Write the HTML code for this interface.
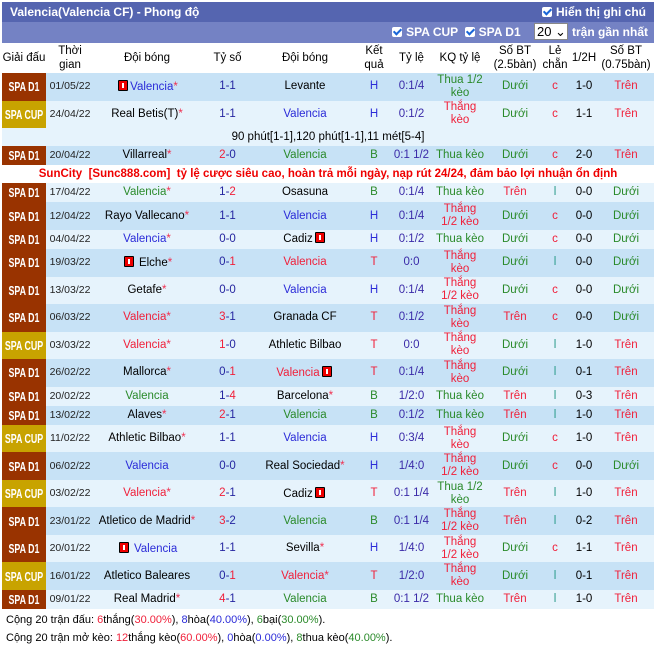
<!DOCTYPE html>
<html><head><meta charset="utf-8">
<style>
body{margin:0;background:#fff;font-family:"Liberation Sans",Arial,sans-serif;font-size:12px;}
#w{position:absolute;left:2px;top:2px;width:652px;}
.b1{height:20px;background:#5565b0;color:#fff;font-weight:bold;font-size:12px;line-height:20px;padding-left:8px;position:relative;}
.b2{height:21px;background:#7482c4;color:#fff;font-weight:bold;font-size:12px;line-height:21px;text-align:right;padding-right:6px;}
.cb{display:inline-block;width:10px;height:10px;background:#fff;border-radius:2px;vertical-align:-1px;margin-right:4px;position:relative;}
.cb:after{content:"";position:absolute;left:3px;top:0px;width:3px;height:6px;border:solid #1a66d8;border-width:0 2px 2px 0;transform:rotate(45deg);}
.sel{display:inline-block;background:#fff;color:#000;font-weight:normal;border:1px solid #888;height:15px;line-height:15px;width:30px;padding-left:2px;text-align:left;vertical-align:0;margin:0 4px 0 10px;font-size:13px;}
table{border-collapse:collapse;table-layout:fixed;width:652px;font-size:11.5px;}
td{text-align:center;padding:0;line-height:13px;overflow:visible;white-space:nowrap;}
th{font-weight:normal;height:30px;line-height:14px;background:#fff;font-size:11.5px;color:#000;padding:0;white-space:nowrap;}
.lg{color:#fff;font-weight:bold;font-size:13px;overflow:hidden;}
.lg span{display:block;width:70px;margin-left:-13px;text-align:center;transform:scaleX(0.68);}
.d1{background:#993300;}.cup{background:#c8a300;}
tr.L td{background:#e6f3fc;}tr.D td{background:#c7e2f6;}
tr.L td.d1,tr.D td.d1{background:#993300;}tr.L td.cup,tr.D td.cup{background:#c8a300;}
.h2 td{height:27.5px;}.h1 td{height:19.2px;}
.dt{font-size:10.5px;color:#222;}
.bl{color:#2b2bd8}.gr{color:#2a8a2a}.rd{color:#f0203a}.st{color:#f03050}
.sb{color:#2525a0}.sr{color:#f0203a}
.od{color:#3a2aa8}
.k{color:#000}
.tl{color:#2a9a8a}
.rc{display:inline-block;width:8px;height:9px;background:#e00;border:1px solid #000;border-radius:1px;vertical-align:-1px;position:relative;margin:0 2px;}
.rc:after{content:"";position:absolute;left:3px;top:2px;width:2px;height:5px;background:#fff;}
.note td{height:18px;background:#e6f3fc;color:#000;}
.sun td{height:18px;background:#fff;color:#e00;font-weight:bold;font-size:11.5px;}
.ft{font-size:11px;line-height:18px;padding-left:4px;}
</style></head><body>
<div id="w">
<div class="b1">Valencia(Valencia CF) - Phong độ<span style="position:absolute;right:8px;top:0"><span class="cb"></span>Hiển thị ghi chú</span></div>
<div class="b2"><span class="cb"></span>SPA CUP &nbsp;<span class="cb"></span>SPA D1 <span class="sel">20 ⌄</span>trận gần nhất</div>
<table>
<colgroup><col style="width:44px"><col style="width:48px"><col style="width:106px"><col style="width:55px"><col style="width:100px"><col style="width:38px"><col style="width:37px"><col style="width:60px"><col style="width:50px"><col style="width:30px"><col style="width:28px"><col style="width:56px"></colgroup>
<tr><th>Giải đấu</th><th>Thời<br>gian</th><th>Đội bóng</th><th>Tỷ số</th><th>Đội bóng</th><th>Kết<br>quả</th><th>Tỷ lệ</th><th>KQ tỷ lệ</th><th>Số BT<br>(2.5bàn)</th><th>Lẻ<br>chẵn</th><th>1/2H</th><th>Số BT<br>(0.75bàn)</th></tr>

<tr class="D h2"><td class="lg d1"><span>SPA D1</span></td><td class="dt">01/05/22</td><td><span class="rc"></span><span class="bl">Valencia</span><span class="st">*</span></td><td><span class="sb">1-1</span></td><td class="k">Levante</td><td class="bl">H</td><td class="od">0:1/4</td><td class="gr">Thua 1/2<br>kèo</td><td class="gr">Dưới</td><td class="rd">c</td><td class="k">1-0</td><td class="rd">Trên</td></tr>
<tr class="L h2"><td class="lg cup"><span>SPA CUP</span></td><td class="dt">24/04/22</td><td class="k">Real Betis(T)<span class="st">*</span></td><td><span class="sb">1-1</span></td><td class="bl">Valencia</td><td class="bl">H</td><td class="od">0:1/2</td><td class="rd">Thắng<br>kèo</td><td class="gr">Dưới</td><td class="rd">c</td><td class="k">1-1</td><td class="rd">Trên</td></tr>
<tr class="note"><td colspan="12">90 phút[1-1],120 phút[1-1],11 mét[5-4]</td></tr>
<tr class="D h1"><td class="lg d1"><span>SPA D1</span></td><td class="dt">20/04/22</td><td class="k">Villarreal<span class="st">*</span></td><td><span class="sr">2</span><span class="sb">-0</span></td><td class="gr">Valencia</td><td class="gr">B</td><td class="od">0:1 1/2</td><td class="gr">Thua kèo</td><td class="gr">Dưới</td><td class="rd">c</td><td class="k">2-0</td><td class="rd">Trên</td></tr>
<tr class="sun"><td colspan="12">SunCity&nbsp; [Sunc888.com]&nbsp; tỷ lệ cược siêu cao, hoàn trả mỗi ngày, nạp rút 24/24, đảm bảo lợi nhuận ổn định</td></tr>

<tr class="L h1"><td class="lg d1"><span>SPA D1</span></td><td class="dt">17/04/22</td><td><span class="gr">Valencia</span><span class="st">*</span></td><td><span class="sb">1-</span><span class="sr">2</span></td><td class="k">Osasuna</td><td class="gr">B</td><td class="od">0:1/4</td><td class="gr">Thua kèo</td><td class="rd">Trên</td><td class="tl">l</td><td class="k">0-0</td><td class="gr">Dưới</td></tr>
<tr class="D h2"><td class="lg d1"><span>SPA D1</span></td><td class="dt">12/04/22</td><td class="k">Rayo Vallecano<span class="st">*</span></td><td><span class="sb">1-1</span></td><td class="bl">Valencia</td><td class="bl">H</td><td class="od">0:1/4</td><td class="rd">Thắng<br>1/2 kèo</td><td class="gr">Dưới</td><td class="rd">c</td><td class="k">0-0</td><td class="gr">Dưới</td></tr>
<tr class="L h1"><td class="lg d1"><span>SPA D1</span></td><td class="dt">04/04/22</td><td><span class="bl">Valencia</span><span class="st">*</span></td><td><span class="sb">0-0</span></td><td class="k">Cadiz<span class="rc"></span></td><td class="bl">H</td><td class="od">0:1/2</td><td class="gr">Thua kèo</td><td class="gr">Dưới</td><td class="rd">c</td><td class="k">0-0</td><td class="gr">Dưới</td></tr>
<tr class="D h2"><td class="lg d1"><span>SPA D1</span></td><td class="dt">19/03/22</td><td class="k"><span class="rc"></span> Elche<span class="st">*</span></td><td><span class="sb">0-</span><span class="sr">1</span></td><td class="rd">Valencia</td><td class="rd">T</td><td class="od">0:0</td><td class="rd">Thắng<br>kèo</td><td class="gr">Dưới</td><td class="tl">l</td><td class="k">0-0</td><td class="gr">Dưới</td></tr>
<tr class="L h2"><td class="lg d1"><span>SPA D1</span></td><td class="dt">13/03/22</td><td class="k">Getafe<span class="st">*</span></td><td><span class="sb">0-0</span></td><td class="bl">Valencia</td><td class="bl">H</td><td class="od">0:1/4</td><td class="rd">Thắng<br>1/2 kèo</td><td class="gr">Dưới</td><td class="rd">c</td><td class="k">0-0</td><td class="gr">Dưới</td></tr>
<tr class="D h2"><td class="lg d1"><span>SPA D1</span></td><td class="dt">06/03/22</td><td><span class="rd">Valencia</span><span class="st">*</span></td><td><span class="sr">3</span><span class="sb">-1</span></td><td class="k">Granada CF</td><td class="rd">T</td><td class="od">0:1/2</td><td class="rd">Thắng<br>kèo</td><td class="rd">Trên</td><td class="rd">c</td><td class="k">0-0</td><td class="gr">Dưới</td></tr>
<tr class="L h2"><td class="lg cup"><span>SPA CUP</span></td><td class="dt">03/03/22</td><td><span class="rd">Valencia</span><span class="st">*</span></td><td><span class="sr">1</span><span class="sb">-0</span></td><td class="k">Athletic Bilbao</td><td class="rd">T</td><td class="od">0:0</td><td class="rd">Thắng<br>kèo</td><td class="gr">Dưới</td><td class="tl">l</td><td class="k">1-0</td><td class="rd">Trên</td></tr>
<tr class="D h2"><td class="lg d1"><span>SPA D1</span></td><td class="dt">26/02/22</td><td class="k">Mallorca<span class="st">*</span></td><td><span class="sb">0-</span><span class="sr">1</span></td><td><span class="rd">Valencia</span><span class="rc"></span></td><td class="rd">T</td><td class="od">0:1/4</td><td class="rd">Thắng<br>kèo</td><td class="gr">Dưới</td><td class="tl">l</td><td class="k">0-1</td><td class="rd">Trên</td></tr>
<tr class="L h1"><td class="lg d1"><span>SPA D1</span></td><td class="dt">20/02/22</td><td class="gr">Valencia</td><td><span class="sb">1-</span><span class="sr">4</span></td><td class="k">Barcelona<span class="st">*</span></td><td class="gr">B</td><td class="od">1/2:0</td><td class="gr">Thua kèo</td><td class="rd">Trên</td><td class="tl">l</td><td class="k">0-3</td><td class="rd">Trên</td></tr>
<tr class="D h1"><td class="lg d1"><span>SPA D1</span></td><td class="dt">13/02/22</td><td class="k">Alaves<span class="st">*</span></td><td><span class="sr">2</span><span class="sb">-1</span></td><td class="gr">Valencia</td><td class="gr">B</td><td class="od">0:1/2</td><td class="gr">Thua kèo</td><td class="rd">Trên</td><td class="tl">l</td><td class="k">1-0</td><td class="rd">Trên</td></tr>
<tr class="L h2"><td class="lg cup"><span>SPA CUP</span></td><td class="dt">11/02/22</td><td class="k">Athletic Bilbao<span class="st">*</span></td><td><span class="sb">1-1</span></td><td class="bl">Valencia</td><td class="bl">H</td><td class="od">0:3/4</td><td class="rd">Thắng<br>kèo</td><td class="gr">Dưới</td><td class="rd">c</td><td class="k">1-0</td><td class="rd">Trên</td></tr>
<tr class="D h2"><td class="lg d1"><span>SPA D1</span></td><td class="dt">06/02/22</td><td class="bl">Valencia</td><td><span class="sb">0-0</span></td><td class="k">Real Sociedad<span class="st">*</span></td><td class="bl">H</td><td class="od">1/4:0</td><td class="rd">Thắng<br>1/2 kèo</td><td class="gr">Dưới</td><td class="rd">c</td><td class="k">0-0</td><td class="gr">Dưới</td></tr>
<tr class="L h2"><td class="lg cup"><span>SPA CUP</span></td><td class="dt">03/02/22</td><td><span class="rd">Valencia</span><span class="st">*</span></td><td><span class="sr">2</span><span class="sb">-1</span></td><td class="k">Cadiz<span class="rc"></span></td><td class="rd">T</td><td class="od">0:1 1/4</td><td class="gr">Thua 1/2<br>kèo</td><td class="rd">Trên</td><td class="tl">l</td><td class="k">1-0</td><td class="rd">Trên</td></tr>
<tr class="D h2"><td class="lg d1"><span>SPA D1</span></td><td class="dt">23/01/22</td><td class="k">Atletico de Madrid<span class="st">*</span></td><td><span class="sr">3</span><span class="sb">-2</span></td><td class="gr">Valencia</td><td class="gr">B</td><td class="od">0:1 1/4</td><td class="rd">Thắng<br>1/2 kèo</td><td class="rd">Trên</td><td class="tl">l</td><td class="k">0-2</td><td class="rd">Trên</td></tr>
<tr class="L h2"><td class="lg d1"><span>SPA D1</span></td><td class="dt">20/01/22</td><td><span class="rc"></span> <span class="bl">Valencia</span></td><td><span class="sb">1-1</span></td><td class="k">Sevilla<span class="st">*</span></td><td class="bl">H</td><td class="od">1/4:0</td><td class="rd">Thắng<br>1/2 kèo</td><td class="gr">Dưới</td><td class="rd">c</td><td class="k">1-1</td><td class="rd">Trên</td></tr>
<tr class="D h2"><td class="lg cup"><span>SPA CUP</span></td><td class="dt">16/01/22</td><td class="k">Atletico Baleares</td><td><span class="sb">0-</span><span class="sr">1</span></td><td><span class="rd">Valencia</span><span class="st">*</span></td><td class="rd">T</td><td class="od">1/2:0</td><td class="rd">Thắng<br>kèo</td><td class="gr">Dưới</td><td class="tl">l</td><td class="k">0-1</td><td class="rd">Trên</td></tr>
<tr class="L h1"><td class="lg d1"><span>SPA D1</span></td><td class="dt">09/01/22</td><td class="k">Real Madrid<span class="st">*</span></td><td><span class="sr">4</span><span class="sb">-1</span></td><td class="gr">Valencia</td><td class="gr">B</td><td class="od">0:1 1/2</td><td class="gr">Thua kèo</td><td class="rd">Trên</td><td class="tl">l</td><td class="k">1-0</td><td class="rd">Trên</td></tr>
</table>
<div class="ft" style="margin-top:2px">Cộng 20 trận đấu: <span class="rd">6</span>thắng(<span class="rd">30.00%</span>), <span class="bl">8</span>hòa(<span class="bl">40.00%</span>), <span class="gr">6</span>bại(<span class="gr">30.00%</span>).</div>
<div class="ft">Cộng 20 trận mở kèo: <span class="rd">12</span>thắng kèo(<span class="rd">60.00%</span>), <span class="bl">0</span>hòa(<span class="bl">0.00%</span>), <span class="gr">8</span>thua kèo(<span class="gr">40.00%</span>).</div>
</div>
</body></html>
